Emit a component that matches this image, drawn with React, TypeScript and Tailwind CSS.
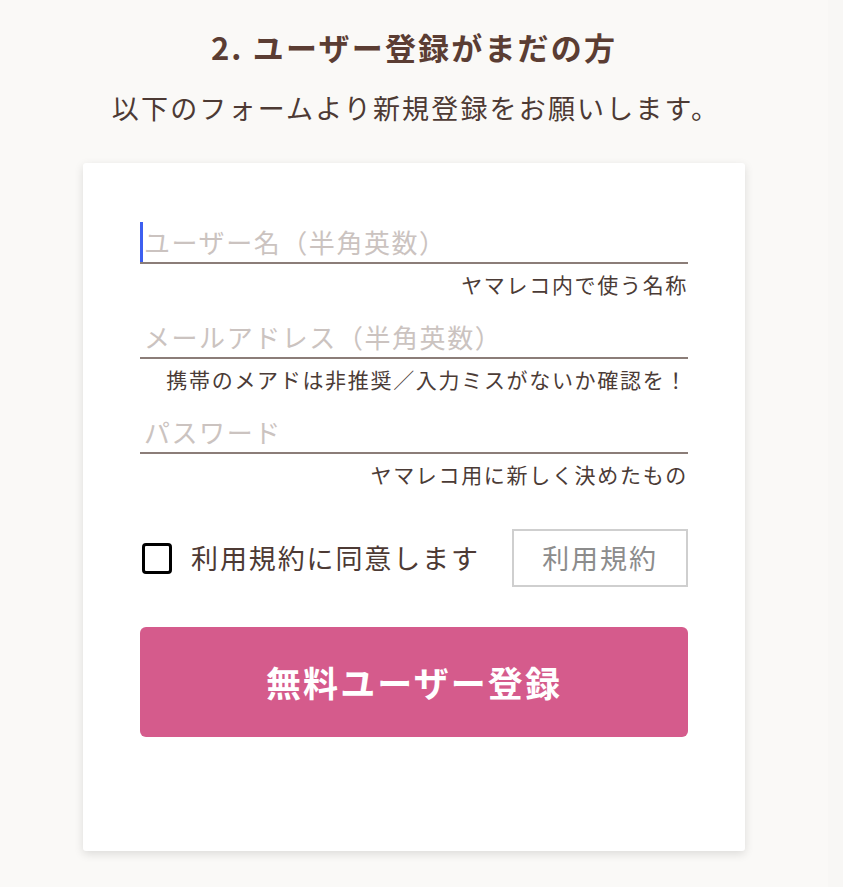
import React from "react";

const fields = [
  { placeholder: "ユーザー名（半角英数）", helper: "ヤマレコ内で使う名称", focused: true, type: "text" },
  { placeholder: "メールアドレス（半角英数）", helper: "携帯のメアドは非推奨／入力ミスがないか確認を！", focused: false, type: "email" },
  { placeholder: "パスワード", helper: "ヤマレコ用に新しく決めたもの", focused: false, type: "password" },
];

const App = () => {
  return (
    <div
      className="flex min-h-[887px] w-[843px] bg-[#faf9f7] overflow-hidden"
      style={{ fontFamily: '"Noto Sans CJK JP", "Noto Sans", sans-serif' }}
    >
      {/* MAIN */}
      <div className="flex w-[828px] flex-col items-center pt-[27px]">
        <h2 className="text-[31px] font-bold leading-[40px] tracking-[0.07em] text-[#5b3d33]">
          2. ユーザー登録がまだの方
        </h2>
        <p className="mt-[23px] pl-[4px] text-[27px] leading-[36px] tracking-[0.08em] text-[#4d3a34]">
          以下のフォームより新規登録をお願いします。
        </p>

        {/* FORM CARD */}
        <div className="mt-[37px] w-[662px] rounded-[3px] bg-white px-[57px] pt-[57px] pb-[114px] shadow-[0_3px_10px_rgba(0,0,0,0.12)]">
          <div className="flex flex-col gap-[16px]">
            {fields.map((f) => (
              <div key={f.placeholder} className="flex flex-col">
                <div className="relative">
                  <input
                    type={f.type}
                    placeholder={f.placeholder}
                    className="h-[44px] w-full border-b-2 border-[#8b7d78] bg-transparent pl-[4px] text-[26px] tracking-[0.06em] text-[#4d3a34] outline-none placeholder:text-[#cbc3c0]"
                  />
                  {f.focused && (
                    <span className="absolute left-0 top-[2px] h-[40px] w-[3px] bg-[#3d5ff0]" />
                  )}
                </div>
                <p className="mt-[5px] text-right text-[21px] leading-[30px] tracking-[0.08em] text-[#4b3b36]">
                  {f.helper}
                </p>
              </div>
            ))}
          </div>

          {/* TERMS */}
          <div className="mt-[40px] flex items-center justify-between">
            <label className="flex items-center gap-[19px] pl-[2px]">
              <span className="h-[31px] w-[30px] rounded-[4px] border-[3px] border-black bg-white" />
              <span className="text-[27px] leading-[36px] tracking-[0.07em] text-[#4d3a34]">
                利用規約に同意します
              </span>
            </label>
            <button className="flex h-[58px] w-[176px] items-center justify-center border-2 border-[#cfcfcf] bg-white text-[27px] tracking-[0.07em] text-[#8c8c8c]">
              利用規約
            </button>
          </div>

          <button className="mt-[40px] flex h-[110px] w-full items-center justify-center rounded-[6px] bg-[#d55b8c] text-[35px] font-bold tracking-[0.06em] text-white">
            無料ユーザー登録
          </button>
        </div>
      </div>

      {/* RIGHT EDGE */}
      <div className="w-[15px] bg-[#f8f7f5]" />
    </div>
  );
};

export default App;
